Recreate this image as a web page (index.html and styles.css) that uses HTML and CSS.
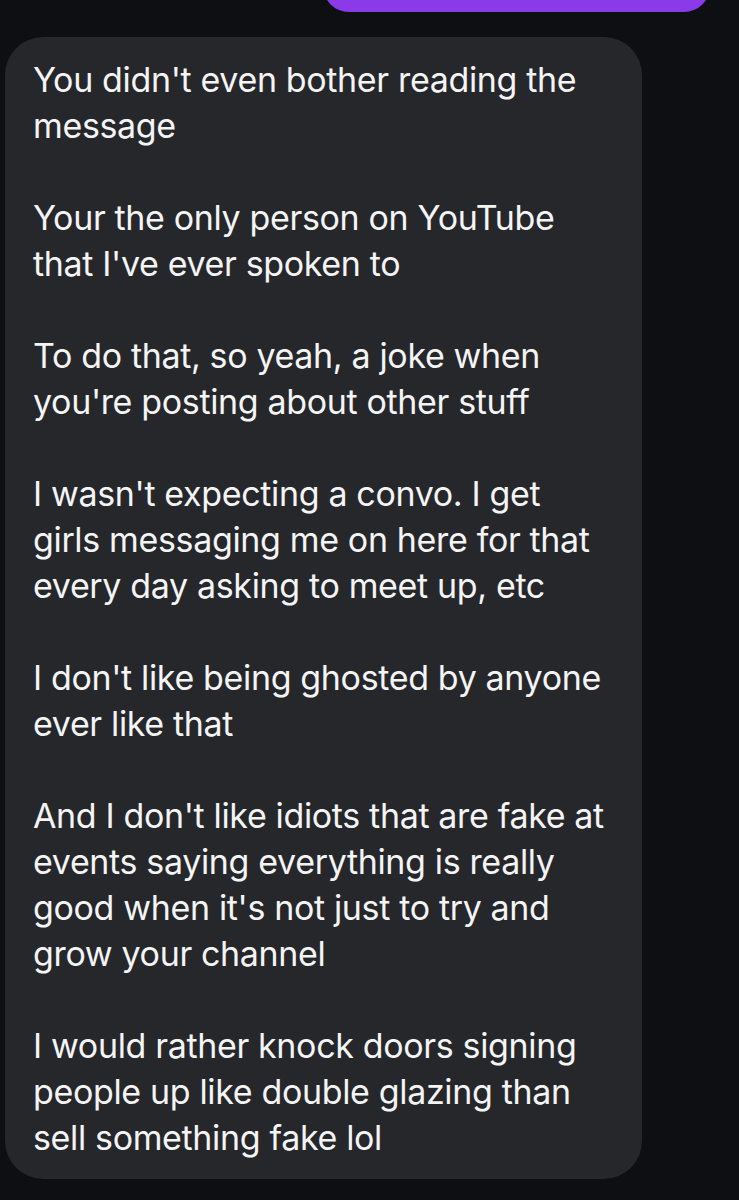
FILE: index.html
```html
<!DOCTYPE html>
<html>
<head>
<meta charset="utf-8">
<link rel="stylesheet" href="styles.css">
</head>
<body>
<div class="chat">
  <div class="sent-row">
    <div class="sent-bubble"></div>
  </div>
  <div class="recv-bubble">
    <p>You didn't even bother reading the<br>message</p>
    <p>Your the only person on YouTube<br>that I've ever spoken to</p>
    <p>To do that, so yeah, a joke when<br>you're posting about other stuff</p>
    <p>I wasn't expecting a convo. I get<br>girls messaging me on here for that<br>every day asking to meet up, etc</p>
    <p>I don't like being ghosted by anyone<br>ever like that</p>
    <p>And I don't like idiots that are fake at<br>events saying everything is really<br>good when it's not just to try and<br>grow your channel</p>
    <p>I would rather knock doors signing<br>people up like double glazing than<br>sell something fake lol</p>
  </div>
</div>
</body>
</html>
```
FILE: styles.css
```css
html, body {
  margin: 0;
  padding: 0;
  background: #0d0f12;
}
body {
  width: 739px;
  height: 1200px;
  overflow: hidden;
  font-family: Inter, "Noto Sans", sans-serif;
}
.chat {
  display: flex;
  flex-direction: column;
}
.sent-row {
  height: 12px;
  overflow: hidden;
  display: flex;
  justify-content: flex-end;
  align-items: flex-end;
  padding-right: 29px;
}
.sent-bubble {
  flex-shrink: 0;
  width: 387px;
  height: 60px;
  background: #8b3ae8;
  border-radius: 26px;
}
.recv-bubble {
  margin-top: 25px;
  margin-left: 5px;
  width: 637px;
  box-sizing: border-box;
  background: #25272b;
  border-radius: 38px;
  padding: 20px 10px 18px 28px;
  color: #f4f4f5;
  font-size: 34px;
  line-height: 46px;
  letter-spacing: -0.35px;
  display: flex;
  flex-direction: column;
  gap: 46px;
}
.recv-bubble p {
  margin: 0;
  white-space: nowrap;
}
```
